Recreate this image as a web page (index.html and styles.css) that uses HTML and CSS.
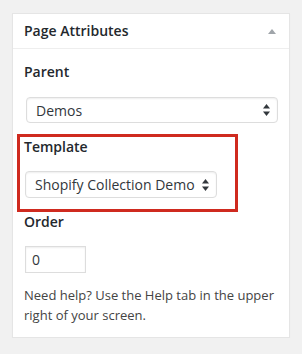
FILE: index.html
```html
<!DOCTYPE html>
<html>
<head>
  <title>Page Attributes</title>
  <link rel="stylesheet" href="styles.css">
</head>
<body>
  <div class="postbox">
    <div class="postbox-header">
      <h2 class="postbox-title">Page Attributes</h2>
      <span class="toggle-arrow"></span>
    </div>

    <div class="postbox-inside">
      <p class="field-label">Parent</p>
      <div class="select select-parent">
        <span class="select-value">Demos</span>
        <svg class="select-arrows" width="7" height="12" viewBox="0 0 7 12">
          <polygon points="3.5,0 7,4.5 0,4.5" />
          <polygon points="0,7.5 7,7.5 3.5,12" />
        </svg>
      </div>

      <!-- highlighted area -->
      <div class="highlight">
        <p class="field-label">Template</p>
        <div class="select select-template">
          <span class="select-value">Shopify Collection Demo</span>
          <svg class="select-arrows" width="7" height="12" viewBox="0 0 7 12">
            <polygon points="3.5,0 7,4.5 0,4.5" />
            <polygon points="0,7.5 7,7.5 3.5,12" />
          </svg>
        </div>
      </div>

      <p class="field-label">Order</p>
      <div class="order-input">0</div>

      <p class="help-text">Need help? Use the Help tab in the upper right of your screen.</p>
    </div>
  </div>
</body>
</html>
```

FILE: styles.css
```css
/* page */
body {
  margin: 0;
  padding: 13px 12px 0;
  background-color: #f1f1f1;
  font-family: "Open Sans", sans-serif;
  color: #444;
}

/* the metabox */
.postbox {
  background-color: #fff;
  border: 1px solid #e5e5e5;
  box-shadow: 0 1px 1px rgba(0, 0, 0, 0.04);
}

.postbox-header {
  display: flex;
  justify-content: space-between;
  align-items: center;
  height: 34px;
  padding: 0 13px 0 11px;
  border-bottom: 1px solid #eee;
}

.postbox-title {
  margin: 0;
  font-size: 14px;
  font-weight: 600;
  color: #23282d;
  line-height: 20px;
}

.toggle-arrow {
  width: 0;
  height: 0;
  border-left: 4px solid transparent;
  border-right: 4px solid transparent;
  border-bottom: 5px solid #a0a5aa;
}

.postbox-inside {
  padding: 13px 11px 12px;
}

/* labels and fields */
.field-label {
  margin: 0;
  font-size: 14px;
  font-weight: 600;
  line-height: 20px;
  color: #23282d;
}

.select {
  display: flex;
  justify-content: space-between;
  align-items: center;
  box-sizing: border-box;
  height: 26px;
  margin-top: 15px;
  padding: 0 7px 0 9px;
  border: 1px solid #ddd;
  border-radius: 4px;
  box-shadow: inset 0 1px 2px rgba(0, 0, 0, 0.07);
  font-size: 14px;
  color: #32373c;
}

.select-parent {
  margin-left: 2px;
}

.select-template {
  width: 192px;
  height: 27px;
  margin-top: 14px;
  margin-left: 1px;
}

.select-arrows {
  fill: #32373c;
}

.highlight {
  width: 221px;
  box-sizing: border-box;
  margin: 11px 0 0 -7px;
  padding: 0 4px 11px;
  border: 3px solid #cf2a1f;
}

.order-input {
  box-sizing: border-box;
  width: 61px;
  height: 27px;
  margin: 14px 0 0 1px;
  padding: 0 6px;
  border: 1px solid #ddd;
  box-shadow: inset 0 1px 2px rgba(0, 0, 0, 0.07);
  font-size: 14px;
  line-height: 25px;
  color: #32373c;
}

.help-text {
  margin: 12px 0 0;
  font-size: 13px;
  line-height: 20px;
}
```
